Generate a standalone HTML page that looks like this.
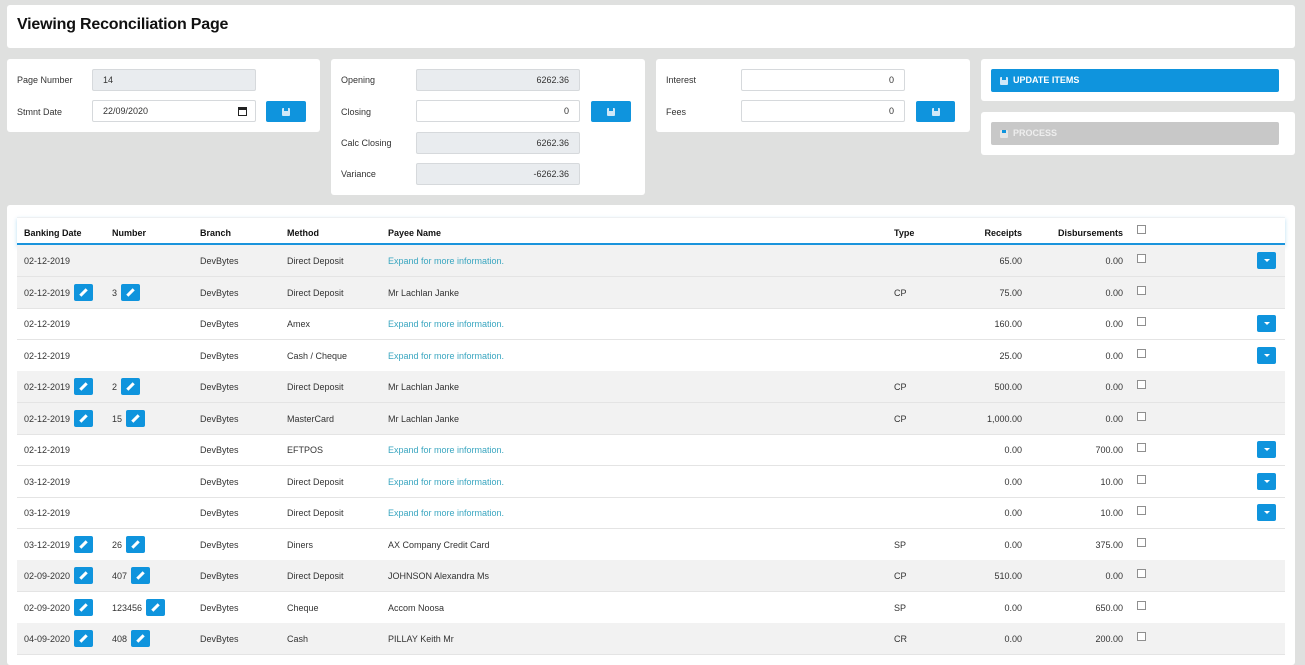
<!DOCTYPE html>
<html><head><meta charset="utf-8"><style>
*{box-sizing:border-box;margin:0;padding:0}
body{width:1305px;height:655px;background:#dfe0df;font-family:"Liberation Sans",sans-serif;font-size:9px;color:#222;position:relative;overflow:hidden}
.card{position:absolute;background:#fff;border-radius:3px}
.lbl{position:absolute;font-size:9px;color:#333}
.inp{position:absolute;height:22px;width:164px;border:1px solid #d6d9dc;border-radius:2px;background:#fff;font-size:9px;line-height:20px;padding:0 10px;text-align:right;color:#333}
.ro{background:#e9ecef}
.btn{position:absolute;background:#0f94dd;border-radius:2px}
.fl{position:absolute;left:50%;top:50%;width:8px;height:8px;margin:-4px 0 0 -4px;background:#cfe8f8;border-radius:1px}
.fl:before{content:"";position:absolute;left:2px;top:0;width:4px;height:3px;background:#0f94dd}
.th{position:absolute;top:0;height:28px;line-height:30px;font-weight:bold;font-size:9px;color:#111}
.row{position:absolute;left:17px;width:1268px;height:32px;border-bottom:1px solid #e4e4e4}
.g{background:#f2f2f2}
.c{position:absolute;top:0;line-height:32px;font-size:9px;color:#333;white-space:nowrap}
.r{text-align:right}
.lk{color:#3aa6c0}
.cb{position:absolute;left:1120px;top:9px;width:9px;height:9px;border:1.5px solid #8f8f8f;background:#fff}
.dd{position:absolute;left:1240px;top:7px;width:19px;height:17px;background:#0f94dd;border-radius:2px}
.dd:after{content:"";position:absolute;left:7px;top:7px;border-left:3px solid transparent;border-right:3px solid transparent;border-top:3px solid #fff}
.ed{display:inline-block;vertical-align:middle;width:19px;height:17px;background:#0f94dd;border-radius:2px;position:relative;margin-left:4px;margin-top:-2px}
.ed:after{content:"";position:absolute;left:8px;top:4px;width:3px;height:9px;background:#fff;transform:rotate(45deg)}
</style></head><body>
<div class="card" style="left:7px;top:5px;width:1288px;height:43px">
<div style="position:absolute;left:10px;top:11px;font-size:16px;font-weight:bold;color:#111;letter-spacing:-0.2px">Viewing Reconciliation Page</div></div>

<div class="card" style="left:7px;top:59px;width:313px;height:73px">
<div class="lbl" style="left:10px;top:16px">Page Number</div>
<div class="inp ro" style="left:85px;top:10px;text-align:left">14</div>
<div class="lbl" style="left:10px;top:48px">Stmnt Date</div>
<div class="inp" style="left:85px;top:41px;text-align:left;line-height:20px"><span style="display:inline-block;line-height:20px">22/09/2020</span><span style="position:absolute;right:8px;top:6px;width:9px;height:9px;border:1.5px solid #222;border-top-width:3px"></span></div>
<div class="btn" style="left:259px;top:42px;width:40px;height:21px"><i class="fl"></i></div>
</div>

<div class="card" style="left:331px;top:59px;width:314px;height:136px">
<div class="lbl" style="left:10px;top:16px">Opening</div>
<div class="inp ro" style="left:85px;top:10px">6262.36</div>
<div class="lbl" style="left:10px;top:48px">Closing</div>
<div class="inp" style="left:85px;top:41px">0</div>
<div class="btn" style="left:260px;top:42px;width:40px;height:21px"><i class="fl"></i></div>
<div class="lbl" style="left:10px;top:79px">Calc Closing</div>
<div class="inp ro" style="left:85px;top:73px">6262.36</div>
<div class="lbl" style="left:10px;top:110px">Variance</div>
<div class="inp ro" style="left:85px;top:104px">-6262.36</div>
</div>

<div class="card" style="left:656px;top:59px;width:314px;height:73px">
<div class="lbl" style="left:10px;top:16px">Interest</div>
<div class="inp" style="left:85px;top:10px">0</div>
<div class="lbl" style="left:10px;top:48px">Fees</div>
<div class="inp" style="left:85px;top:41px">0</div>
<div class="btn" style="left:260px;top:42px;width:39px;height:21px"><i class="fl"></i></div>
</div>

<div class="card" style="left:981px;top:59px;width:314px;height:42px">
<div class="btn" style="left:10px;top:10px;width:288px;height:23px;color:#fff;font-weight:bold;font-size:9px;line-height:23px;padding-left:22px">UPDATE ITEMS<i class="fl" style="left:13px"></i></div></div>
<div class="card" style="left:981px;top:112px;width:314px;height:43px">
<div style="position:absolute;left:10px;top:10px;width:288px;height:23px;background:#c8c8c8;border-radius:2px;color:#eee;font-weight:bold;font-size:9px;line-height:23px;padding-left:22px">PROCESS<i class="fl" style="left:13px;background:#e6e6e6"></i></div></div>

<div class="card" style="left:7px;top:205px;width:1288px;height:460px">
<div style="position:absolute;left:10px;top:12px;width:1268px;height:28px;border-bottom:2px solid #1a94dc;box-shadow:0 2px 4px rgba(26,148,220,.3);border-top:1px solid #eef0f2">
<div class="th" style="left:7px">Banking Date</div>
<div class="th" style="left:95px">Number</div>
<div class="th" style="left:183px">Branch</div>
<div class="th" style="left:270px">Method</div>
<div class="th" style="left:371px">Payee Name</div>
<div class="th" style="left:877px">Type</div>
<div class="th" style="left:960px;width:45px;text-align:right">Receipts</div>
<div class="th" style="left:1030px;width:76px;text-align:right">Disbursements</div>
<div class="cb" style="left:1120px;top:7px"></div>
</div></div>

<div style="position:absolute;left:0;top:0">
<div class="row g" style="top:245px"><div class="c" style="left:7px">02-12-2019</div><div class="c" style="left:183px">DevBytes</div><div class="c" style="left:270px">Direct Deposit</div><div class="c lk" style="left:371px">Expand for more information.</div><div class="c r" style="right:263px">65.00</div><div class="c r" style="right:162px">0.00</div><div class="cb"></div><div class="dd"></div></div>
<div class="row g" style="top:277px"><div class="c" style="left:7px">02-12-2019<span class="ed"></span></div><div class="c" style="left:95px">3<span class="ed"></span></div><div class="c" style="left:183px">DevBytes</div><div class="c" style="left:270px">Direct Deposit</div><div class="c" style="left:371px">Mr Lachlan Janke</div><div class="c" style="left:877px">CP</div><div class="c r" style="right:263px">75.00</div><div class="c r" style="right:162px">0.00</div><div class="cb"></div></div>
<div class="row" style="top:308px"><div class="c" style="left:7px">02-12-2019</div><div class="c" style="left:183px">DevBytes</div><div class="c" style="left:270px">Amex</div><div class="c lk" style="left:371px">Expand for more information.</div><div class="c r" style="right:263px">160.00</div><div class="c r" style="right:162px">0.00</div><div class="cb"></div><div class="dd"></div></div>
<div class="row" style="top:340px"><div class="c" style="left:7px">02-12-2019</div><div class="c" style="left:183px">DevBytes</div><div class="c" style="left:270px">Cash / Cheque</div><div class="c lk" style="left:371px">Expand for more information.</div><div class="c r" style="right:263px">25.00</div><div class="c r" style="right:162px">0.00</div><div class="cb"></div><div class="dd"></div></div>
<div class="row g" style="top:371px"><div class="c" style="left:7px">02-12-2019<span class="ed"></span></div><div class="c" style="left:95px">2<span class="ed"></span></div><div class="c" style="left:183px">DevBytes</div><div class="c" style="left:270px">Direct Deposit</div><div class="c" style="left:371px">Mr Lachlan Janke</div><div class="c" style="left:877px">CP</div><div class="c r" style="right:263px">500.00</div><div class="c r" style="right:162px">0.00</div><div class="cb"></div></div>
<div class="row g" style="top:403px"><div class="c" style="left:7px">02-12-2019<span class="ed"></span></div><div class="c" style="left:95px">15<span class="ed"></span></div><div class="c" style="left:183px">DevBytes</div><div class="c" style="left:270px">MasterCard</div><div class="c" style="left:371px">Mr Lachlan Janke</div><div class="c" style="left:877px">CP</div><div class="c r" style="right:263px">1,000.00</div><div class="c r" style="right:162px">0.00</div><div class="cb"></div></div>
<div class="row" style="top:434px"><div class="c" style="left:7px">02-12-2019</div><div class="c" style="left:183px">DevBytes</div><div class="c" style="left:270px">EFTPOS</div><div class="c lk" style="left:371px">Expand for more information.</div><div class="c r" style="right:263px">0.00</div><div class="c r" style="right:162px">700.00</div><div class="cb"></div><div class="dd"></div></div>
<div class="row" style="top:466px"><div class="c" style="left:7px">03-12-2019</div><div class="c" style="left:183px">DevBytes</div><div class="c" style="left:270px">Direct Deposit</div><div class="c lk" style="left:371px">Expand for more information.</div><div class="c r" style="right:263px">0.00</div><div class="c r" style="right:162px">10.00</div><div class="cb"></div><div class="dd"></div></div>
<div class="row" style="top:497px"><div class="c" style="left:7px">03-12-2019</div><div class="c" style="left:183px">DevBytes</div><div class="c" style="left:270px">Direct Deposit</div><div class="c lk" style="left:371px">Expand for more information.</div><div class="c r" style="right:263px">0.00</div><div class="c r" style="right:162px">10.00</div><div class="cb"></div><div class="dd"></div></div>
<div class="row" style="top:529px"><div class="c" style="left:7px">03-12-2019<span class="ed"></span></div><div class="c" style="left:95px">26<span class="ed"></span></div><div class="c" style="left:183px">DevBytes</div><div class="c" style="left:270px">Diners</div><div class="c" style="left:371px">AX Company Credit Card</div><div class="c" style="left:877px">SP</div><div class="c r" style="right:263px">0.00</div><div class="c r" style="right:162px">375.00</div><div class="cb"></div></div>
<div class="row g" style="top:560px"><div class="c" style="left:7px">02-09-2020<span class="ed"></span></div><div class="c" style="left:95px">407<span class="ed"></span></div><div class="c" style="left:183px">DevBytes</div><div class="c" style="left:270px">Direct Deposit</div><div class="c" style="left:371px">JOHNSON Alexandra Ms</div><div class="c" style="left:877px">CP</div><div class="c r" style="right:263px">510.00</div><div class="c r" style="right:162px">0.00</div><div class="cb"></div></div>
<div class="row" style="top:592px"><div class="c" style="left:7px">02-09-2020<span class="ed"></span></div><div class="c" style="left:95px">123456<span class="ed"></span></div><div class="c" style="left:183px">DevBytes</div><div class="c" style="left:270px">Cheque</div><div class="c" style="left:371px">Accom Noosa</div><div class="c" style="left:877px">SP</div><div class="c r" style="right:263px">0.00</div><div class="c r" style="right:162px">650.00</div><div class="cb"></div></div>
<div class="row g" style="top:623px"><div class="c" style="left:7px">04-09-2020<span class="ed"></span></div><div class="c" style="left:95px">408<span class="ed"></span></div><div class="c" style="left:183px">DevBytes</div><div class="c" style="left:270px">Cash</div><div class="c" style="left:371px">PILLAY Keith Mr</div><div class="c" style="left:877px">CR</div><div class="c r" style="right:263px">0.00</div><div class="c r" style="right:162px">200.00</div><div class="cb"></div></div>
</div>
</body></html>
